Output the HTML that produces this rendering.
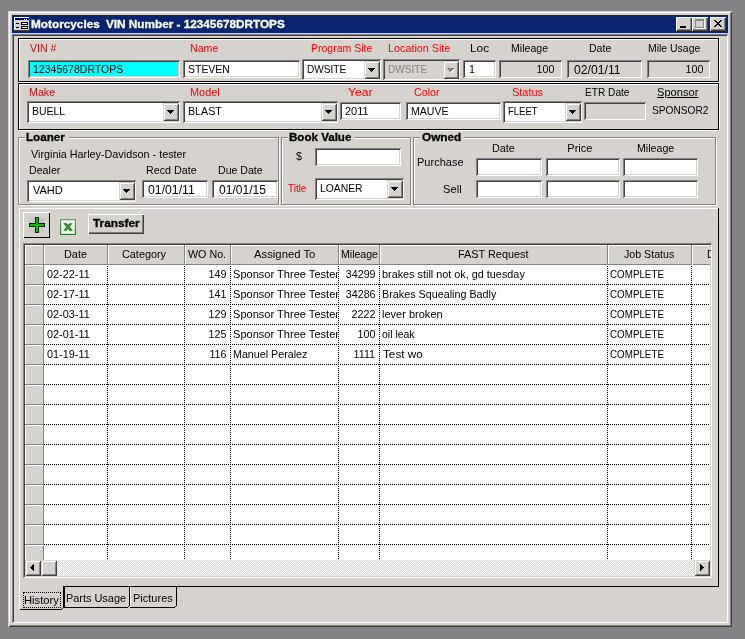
<!DOCTYPE html>
<html lang="en"><head><meta charset="utf-8"><title>Motorcycles VIN Number - 12345678DRTOPS</title>
<style>
html,body{margin:0;padding:0;}
body{width:745px;height:639px;background:#848284;position:relative;overflow:hidden;
font-family:"Liberation Sans",sans-serif;font-size:11px;line-height:13px;}
body div,body svg,body i,body span{position:absolute;display:block;}
.t{white-space:pre;height:13px;}
</style></head><body>
<div style="left:8px;top:11px;width:724px;height:616px;background:#d6d3ce;box-shadow:inset 1px 1px 0 #d6d3ce,inset -1px -1px 0 #424142,inset 2px 2px 0 #fff,inset -2px -2px 0 #848284;"></div>
<div style="left:12px;top:15px;width:716px;height:18px;background:#0a2470;"></div>
<div style="left:12px;top:34px;width:716px;height:589px;box-shadow:inset 1px 1px 0 #848284,inset -1px -1px 0 #fff,inset 2px 2px 0 #424142;"></div>
<svg style="left:14px;top:16px" width="16" height="16" viewBox="0 0 16 16" shape-rendering="crispEdges">
<rect x="0" y="1" width="16" height="14" fill="#d6d3ce"/>
<rect x="0" y="1" width="15" height="1" fill="#fff"/><rect x="0" y="1" width="1" height="13" fill="#fff"/>
<rect x="15" y="1" width="1" height="14" fill="#424142"/><rect x="0" y="14" width="16" height="1" fill="#424142"/>
<rect x="1" y="2" width="14" height="2" fill="#000080"/>
<rect x="10" y="3" width="1" height="1" fill="#fff"/><rect x="12" y="3" width="1" height="1" fill="#fff"/>
<rect x="2" y="7" width="3" height="1" fill="#000"/><rect x="2" y="11" width="3" height="1" fill="#000"/>
<rect x="7" y="6" width="7" height="3" fill="#000"/><rect x="8" y="7" width="5" height="1" fill="#fff"/>
<rect x="7" y="10" width="7" height="3" fill="#000"/><rect x="8" y="11" width="5" height="1" fill="#fff"/>
</svg>
<div style="left:676px;top:17px;width:16px;height:14px;background:#d6d3ce;box-shadow:inset 1px 1px 0 #fff,inset -1px -1px 0 #424142,inset -2px -2px 0 #848284;"><i style="left:4px;top:9px;width:6px;height:2px;background:#000"></i></div>
<div style="left:692px;top:17px;width:16px;height:14px;background:#d6d3ce;box-shadow:inset 1px 1px 0 #fff,inset -1px -1px 0 #424142,inset -2px -2px 0 #848284;"><i style="left:3px;top:2px;width:9px;height:9px;box-sizing:border-box;border:1px solid #848284;border-top-width:2px;box-shadow:1px 1px 0 #fff"></i></div>
<div style="left:710px;top:17px;width:16px;height:14px;background:#d6d3ce;box-shadow:inset 1px 1px 0 #fff,inset -1px -1px 0 #424142,inset -2px -2px 0 #848284;"><svg style="left:4px;top:3px" width="8" height="7" viewBox="0 0 8 7" shape-rendering="crispEdges"><path d="M0 0h2v1h1v1h2v-1h1v-1h2v1h-1v1h-1v1h-1v1h1v1h1v1h1v1h-2v-1h-1v-1h-2v1h-1v1h-2v-1h1v-1h1v-1h1v-1h-1v-1h-1v-1h-1z" fill="#000"/></svg></div>
<div style="left:19px;top:39px;width:701px;height:44px;box-sizing:border-box;border:1px solid #fff;"></div>
<div style="left:18px;top:38px;width:701px;height:44px;box-sizing:border-box;border:1px solid #000;"></div>
<div style="left:28px;top:60px;width:152px;height:18px;background:#00ffff;box-shadow:inset 1px 1px 0 #848284,inset -1px -1px 0 #fff,inset 2px 2px 0 #424142,inset -2px -2px 0 #d6d3ce;"></div>
<div style="left:183px;top:60px;width:117px;height:18px;background:#fff;box-shadow:inset 1px 1px 0 #848284,inset -1px -1px 0 #fff,inset 2px 2px 0 #424142,inset -2px -2px 0 #d6d3ce;"></div>
<div style="left:302px;top:59px;width:79px;height:21px;background:#fff;box-shadow:inset 1px 1px 0 #848284,inset -1px -1px 0 #fff,inset 2px 2px 0 #424142,inset -2px -2px 0 #d6d3ce;"></div>
<div style="left:364px;top:61px;width:16px;height:18px;background:#d6d3ce;box-shadow:inset 1px 1px 0 #d6d3ce,inset -1px -1px 0 #424142,inset 2px 2px 0 #fff,inset -2px -2px 0 #848284;"><svg style="left:4px;top:7px" width="8" height="5" viewBox="0 0 8 5" shape-rendering="crispEdges"><path d="M0 0h7v1h-1v1h-1v1h-1v1h-1v-1h-1v-1h-1v-1h-1z" fill="#000"/></svg></div>
<div style="left:383px;top:59px;width:77px;height:21px;background:#d6d3ce;box-shadow:inset 1px 1px 0 #848284,inset -1px -1px 0 #fff,inset 2px 2px 0 #424142,inset -2px -2px 0 #d6d3ce;"></div>
<div style="left:443px;top:61px;width:16px;height:18px;background:#d6d3ce;box-shadow:inset 1px 1px 0 #d6d3ce,inset -1px -1px 0 #424142,inset 2px 2px 0 #fff,inset -2px -2px 0 #848284;"><svg style="left:4px;top:7px" width="8" height="5" viewBox="0 0 8 5" shape-rendering="crispEdges"><path d="M1 1h7v1h-1v1h-1v1h-1v1h-1v-1h-1v-1h-1v-1h-1z" fill="#fff"/><path d="M0 0h7v1h-1v1h-1v1h-1v1h-1v-1h-1v-1h-1v-1h-1z" fill="#848284"/></svg></div>
<div style="left:463px;top:60px;width:33px;height:18px;background:#fff;box-shadow:inset 1px 1px 0 #848284,inset -1px -1px 0 #fff,inset 2px 2px 0 #424142,inset -2px -2px 0 #d6d3ce;"></div>
<div style="left:499px;top:60px;width:63px;height:18px;background:#d6d3ce;box-shadow:inset 1px 1px 0 #848284,inset -1px -1px 0 #fff,inset 2px 2px 0 #424142,inset -2px -2px 0 #d6d3ce;"></div>
<div style="left:567px;top:60px;width:75px;height:18px;background:#d6d3ce;box-shadow:inset 1px 1px 0 #848284,inset -1px -1px 0 #fff,inset 2px 2px 0 #424142,inset -2px -2px 0 #d6d3ce;"></div>
<div style="left:647px;top:60px;width:63px;height:18px;background:#d6d3ce;box-shadow:inset 1px 1px 0 #848284,inset -1px -1px 0 #fff,inset 2px 2px 0 #424142,inset -2px -2px 0 #d6d3ce;"></div>
<div style="left:19px;top:84px;width:701px;height:47px;box-sizing:border-box;border:1px solid #fff;"></div>
<div style="left:18px;top:83px;width:701px;height:47px;box-sizing:border-box;border:1px solid #000;"></div>
<div style="left:27px;top:101px;width:153px;height:22px;background:#fff;box-shadow:inset 1px 1px 0 #848284,inset -1px -1px 0 #fff,inset 2px 2px 0 #424142,inset -2px -2px 0 #d6d3ce;"></div>
<div style="left:163px;top:103px;width:16px;height:18px;background:#d6d3ce;box-shadow:inset 1px 1px 0 #d6d3ce,inset -1px -1px 0 #424142,inset 2px 2px 0 #fff,inset -2px -2px 0 #848284;"><svg style="left:4px;top:7px" width="8" height="5" viewBox="0 0 8 5" shape-rendering="crispEdges"><path d="M0 0h7v1h-1v1h-1v1h-1v1h-1v-1h-1v-1h-1v-1h-1z" fill="#000"/></svg></div>
<div style="left:183px;top:101px;width:155px;height:22px;background:#fff;box-shadow:inset 1px 1px 0 #848284,inset -1px -1px 0 #fff,inset 2px 2px 0 #424142,inset -2px -2px 0 #d6d3ce;"></div>
<div style="left:321px;top:103px;width:16px;height:18px;background:#d6d3ce;box-shadow:inset 1px 1px 0 #d6d3ce,inset -1px -1px 0 #424142,inset 2px 2px 0 #fff,inset -2px -2px 0 #848284;"><svg style="left:4px;top:7px" width="8" height="5" viewBox="0 0 8 5" shape-rendering="crispEdges"><path d="M0 0h7v1h-1v1h-1v1h-1v1h-1v-1h-1v-1h-1v-1h-1z" fill="#000"/></svg></div>
<div style="left:340px;top:102px;width:61px;height:18px;background:#fff;box-shadow:inset 1px 1px 0 #848284,inset -1px -1px 0 #fff,inset 2px 2px 0 #424142,inset -2px -2px 0 #d6d3ce;"></div>
<div style="left:406px;top:102px;width:95px;height:18px;background:#fff;box-shadow:inset 1px 1px 0 #848284,inset -1px -1px 0 #fff,inset 2px 2px 0 #424142,inset -2px -2px 0 #d6d3ce;"></div>
<div style="left:503px;top:101px;width:79px;height:22px;background:#fff;box-shadow:inset 1px 1px 0 #848284,inset -1px -1px 0 #fff,inset 2px 2px 0 #424142,inset -2px -2px 0 #d6d3ce;"></div>
<div style="left:565px;top:103px;width:16px;height:18px;background:#d6d3ce;box-shadow:inset 1px 1px 0 #d6d3ce,inset -1px -1px 0 #424142,inset 2px 2px 0 #fff,inset -2px -2px 0 #848284;"><svg style="left:4px;top:7px" width="8" height="5" viewBox="0 0 8 5" shape-rendering="crispEdges"><path d="M0 0h7v1h-1v1h-1v1h-1v1h-1v-1h-1v-1h-1v-1h-1z" fill="#000"/></svg></div>
<div style="left:584px;top:102px;width:62px;height:18px;background:#d6d3ce;box-shadow:inset 1px 1px 0 #848284,inset -1px -1px 0 #fff,inset 2px 2px 0 #424142,inset -2px -2px 0 #d6d3ce;"></div>
<div style="left:19px;top:138px;width:261px;height:68px;box-sizing:border-box;border:1px solid #fff;"></div>
<div style="left:18px;top:137px;width:261px;height:68px;box-sizing:border-box;border:1px solid #848284;"></div>
<div style="left:25px;top:135px;width:44px;height:5px;background:#d6d3ce;"></div>
<div style="left:282px;top:138px;width:130px;height:68px;box-sizing:border-box;border:1px solid #fff;"></div>
<div style="left:281px;top:137px;width:130px;height:68px;box-sizing:border-box;border:1px solid #848284;"></div>
<div style="left:288px;top:135px;width:67px;height:5px;background:#d6d3ce;"></div>
<div style="left:414px;top:138px;width:303px;height:68px;box-sizing:border-box;border:1px solid #fff;"></div>
<div style="left:413px;top:137px;width:303px;height:68px;box-sizing:border-box;border:1px solid #848284;"></div>
<div style="left:420px;top:135px;width:44px;height:5px;background:#d6d3ce;"></div>
<div style="left:27px;top:180px;width:109px;height:22px;background:#fff;box-shadow:inset 1px 1px 0 #848284,inset -1px -1px 0 #fff,inset 2px 2px 0 #424142,inset -2px -2px 0 #d6d3ce;"></div>
<div style="left:119px;top:182px;width:16px;height:18px;background:#d6d3ce;box-shadow:inset 1px 1px 0 #d6d3ce,inset -1px -1px 0 #424142,inset 2px 2px 0 #fff,inset -2px -2px 0 #848284;"><svg style="left:4px;top:7px" width="8" height="5" viewBox="0 0 8 5" shape-rendering="crispEdges"><path d="M0 0h7v1h-1v1h-1v1h-1v1h-1v-1h-1v-1h-1v-1h-1z" fill="#000"/></svg></div>
<div style="left:142px;top:180px;width:66px;height:18px;background:#fff;box-shadow:inset 1px 1px 0 #848284,inset -1px -1px 0 #fff,inset 2px 2px 0 #424142,inset -2px -2px 0 #d6d3ce;"></div>
<div style="left:212px;top:180px;width:66px;height:18px;background:#fff;box-shadow:inset 1px 1px 0 #848284,inset -1px -1px 0 #fff,inset 2px 2px 0 #424142,inset -2px -2px 0 #d6d3ce;"></div>
<div style="left:315px;top:148px;width:86px;height:18px;background:#fff;box-shadow:inset 1px 1px 0 #848284,inset -1px -1px 0 #fff,inset 2px 2px 0 #424142,inset -2px -2px 0 #d6d3ce;"></div>
<div style="left:315px;top:178px;width:89px;height:22px;background:#fff;box-shadow:inset 1px 1px 0 #848284,inset -1px -1px 0 #fff,inset 2px 2px 0 #424142,inset -2px -2px 0 #d6d3ce;"></div>
<div style="left:387px;top:180px;width:16px;height:18px;background:#d6d3ce;box-shadow:inset 1px 1px 0 #d6d3ce,inset -1px -1px 0 #424142,inset 2px 2px 0 #fff,inset -2px -2px 0 #848284;"><svg style="left:4px;top:7px" width="8" height="5" viewBox="0 0 8 5" shape-rendering="crispEdges"><path d="M0 0h7v1h-1v1h-1v1h-1v1h-1v-1h-1v-1h-1v-1h-1z" fill="#000"/></svg></div>
<div style="left:476px;top:158px;width:66px;height:18px;background:#fff;box-shadow:inset 1px 1px 0 #848284,inset -1px -1px 0 #fff,inset 2px 2px 0 #424142,inset -2px -2px 0 #d6d3ce;"></div>
<div style="left:476px;top:180px;width:66px;height:18px;background:#fff;box-shadow:inset 1px 1px 0 #848284,inset -1px -1px 0 #fff,inset 2px 2px 0 #424142,inset -2px -2px 0 #d6d3ce;"></div>
<div style="left:546px;top:158px;width:74px;height:18px;background:#fff;box-shadow:inset 1px 1px 0 #848284,inset -1px -1px 0 #fff,inset 2px 2px 0 #424142,inset -2px -2px 0 #d6d3ce;"></div>
<div style="left:546px;top:180px;width:74px;height:18px;background:#fff;box-shadow:inset 1px 1px 0 #848284,inset -1px -1px 0 #fff,inset 2px 2px 0 #424142,inset -2px -2px 0 #d6d3ce;"></div>
<div style="left:623px;top:158px;width:75px;height:18px;background:#fff;box-shadow:inset 1px 1px 0 #848284,inset -1px -1px 0 #fff,inset 2px 2px 0 #424142,inset -2px -2px 0 #d6d3ce;"></div>
<div style="left:623px;top:180px;width:75px;height:18px;background:#fff;box-shadow:inset 1px 1px 0 #848284,inset -1px -1px 0 #fff,inset 2px 2px 0 #424142,inset -2px -2px 0 #d6d3ce;"></div>
<div style="left:19px;top:208px;width:700px;height:379px;background:#d6d3ce;box-shadow:inset -1px -1px 0 #000,inset 1px 1px 0 #fff;"></div>
<div style="left:23px;top:212px;width:27px;height:26px;background:#d6d3ce;box-shadow:inset 1px 1px 0 #fff,inset -1px -1px 0 #000;"><i style="left:6px;top:5px;width:16px;height:16px;background:#c9c9c9"></i><svg style="left:6px;top:5px" width="16" height="16" viewBox="0 0 16 16" shape-rendering="crispEdges"><path d="M6 0h4v6h6v4h-6v6h-4v-6h-6v-4h6z" fill="#002000"/><path d="M7 1h2v6h6v2h-6v6h-2v-6h-6v-2h6z" fill="#00c400"/></svg></div>
<svg style="left:60px;top:219px" width="16" height="16" viewBox="0 0 16 16">
<defs><linearGradient id="xg" x1="0" y1="0" x2="0" y2="1"><stop offset="0" stop-color="#6aa06a"/><stop offset="1" stop-color="#2f6f2f"/></linearGradient></defs>
<rect x="0" y="0" width="16" height="16" fill="url(#xg)"/>
<rect x="1" y="1" width="14" height="14" fill="#c2e2c2"/>
<rect x="2" y="2" width="12" height="12" fill="#f2fcf2"/>
<path d="M3.2 4.3h3.4L13 11.7H9.6z" fill="#155c15"/>
<path d="M12.8 4.3H9.4L3 11.7h3.4z" fill="#2c902c"/>
<path d="M4.6 5h1.6l5.2 6H9.8z" fill="#3aa83a"/>
</svg>
<div style="left:88px;top:214px;width:56px;height:20px;background:#d6d3ce;box-shadow:inset 1px 1px 0 #fff,inset -1px -1px 0 #424142,inset -2px -2px 0 #848284;"></div>
<div style="left:23px;top:243px;width:689px;height:335px;background:#fff;box-shadow:inset 1px 1px 0 #848284,inset -1px -1px 0 #fff,inset 2px 2px 0 #424142,inset -2px -2px 0 #d6d3ce;"></div>
<div style="left:25px;top:245px;width:19px;height:20px;background:#d6d3ce;box-shadow:inset -1px -1px 0 #848284,inset 1px 1px 0 #fff;"></div>
<div style="left:44px;top:245px;width:64px;height:20px;background:#d6d3ce;box-shadow:inset -1px -1px 0 #848284,inset 1px 1px 0 #fff;"></div>
<div style="left:108px;top:245px;width:77px;height:20px;background:#d6d3ce;box-shadow:inset -1px -1px 0 #848284,inset 1px 1px 0 #fff;"></div>
<div style="left:185px;top:245px;width:46px;height:20px;background:#d6d3ce;box-shadow:inset -1px -1px 0 #848284,inset 1px 1px 0 #fff;"></div>
<div style="left:231px;top:245px;width:108px;height:20px;background:#d6d3ce;box-shadow:inset -1px -1px 0 #848284,inset 1px 1px 0 #fff;"></div>
<div style="left:339px;top:245px;width:41px;height:20px;background:#d6d3ce;box-shadow:inset -1px -1px 0 #848284,inset 1px 1px 0 #fff;"></div>
<div style="left:380px;top:245px;width:228px;height:20px;background:#d6d3ce;box-shadow:inset -1px -1px 0 #848284,inset 1px 1px 0 #fff;"></div>
<div style="left:608px;top:245px;width:84px;height:20px;background:#d6d3ce;box-shadow:inset -1px -1px 0 #848284,inset 1px 1px 0 #fff;"></div>
<div style="left:692px;top:245px;width:18px;height:20px;background:#d6d3ce;box-shadow:inset 1px 1px 0 #fff,inset 0 -1px 0 #848284;"></div>
<div style="left:25px;top:265px;width:19px;height:20px;background:#d6d3ce;box-shadow:inset -1px -1px 0 #848284,inset 1px 1px 0 #fff;"></div>
<div style="left:25px;top:285px;width:19px;height:20px;background:#d6d3ce;box-shadow:inset -1px -1px 0 #848284,inset 1px 1px 0 #fff;"></div>
<div style="left:25px;top:305px;width:19px;height:20px;background:#d6d3ce;box-shadow:inset -1px -1px 0 #848284,inset 1px 1px 0 #fff;"></div>
<div style="left:25px;top:325px;width:19px;height:20px;background:#d6d3ce;box-shadow:inset -1px -1px 0 #848284,inset 1px 1px 0 #fff;"></div>
<div style="left:25px;top:345px;width:19px;height:20px;background:#d6d3ce;box-shadow:inset -1px -1px 0 #848284,inset 1px 1px 0 #fff;"></div>
<div style="left:25px;top:365px;width:19px;height:20px;background:#d6d3ce;box-shadow:inset -1px -1px 0 #848284,inset 1px 1px 0 #fff;"></div>
<div style="left:25px;top:385px;width:19px;height:20px;background:#d6d3ce;box-shadow:inset -1px -1px 0 #848284,inset 1px 1px 0 #fff;"></div>
<div style="left:25px;top:405px;width:19px;height:20px;background:#d6d3ce;box-shadow:inset -1px -1px 0 #848284,inset 1px 1px 0 #fff;"></div>
<div style="left:25px;top:425px;width:19px;height:20px;background:#d6d3ce;box-shadow:inset -1px -1px 0 #848284,inset 1px 1px 0 #fff;"></div>
<div style="left:25px;top:445px;width:19px;height:20px;background:#d6d3ce;box-shadow:inset -1px -1px 0 #848284,inset 1px 1px 0 #fff;"></div>
<div style="left:25px;top:465px;width:19px;height:20px;background:#d6d3ce;box-shadow:inset -1px -1px 0 #848284,inset 1px 1px 0 #fff;"></div>
<div style="left:25px;top:485px;width:19px;height:20px;background:#d6d3ce;box-shadow:inset -1px -1px 0 #848284,inset 1px 1px 0 #fff;"></div>
<div style="left:25px;top:505px;width:19px;height:20px;background:#d6d3ce;box-shadow:inset -1px -1px 0 #848284,inset 1px 1px 0 #fff;"></div>
<div style="left:25px;top:525px;width:19px;height:20px;background:#d6d3ce;box-shadow:inset -1px -1px 0 #848284,inset 1px 1px 0 #fff;"></div>
<div style="left:25px;top:545px;width:19px;height:15px;background:#d6d3ce;box-shadow:inset 1px 1px 0 #fff,inset -1px 0 0 #848284;"></div>
<svg style="left:44px;top:265px" width="666" height="295" viewBox="0 0 666 295" shape-rendering="crispEdges"><g stroke="#000" stroke-width="1" stroke-dasharray="1 1" fill="none">
<path d="M0 19.5H666"/>
<path d="M0 39.5H666"/>
<path d="M0 59.5H666"/>
<path d="M0 79.5H666"/>
<path d="M0 99.5H666"/>
<path d="M0 119.5H666"/>
<path d="M0 139.5H666"/>
<path d="M0 159.5H666"/>
<path d="M0 179.5H666"/>
<path d="M0 199.5H666"/>
<path d="M0 219.5H666"/>
<path d="M0 239.5H666"/>
<path d="M0 259.5H666"/>
<path d="M0 279.5H666"/>
<path d="M63.5 0V295" stroke-dashoffset="1"/>
<path d="M140.5 0V295" stroke-dashoffset="1"/>
<path d="M186.5 0V295" stroke-dashoffset="1"/>
<path d="M294.5 0V295" stroke-dashoffset="1"/>
<path d="M335.5 0V295" stroke-dashoffset="1"/>
<path d="M563.5 0V295" stroke-dashoffset="1"/>
<path d="M647.5 0V295" stroke-dashoffset="1"/>
</g></svg>
<svg style="left:25px;top:560px" width="685" height="16" viewBox="0 0 685 16" shape-rendering="crispEdges"><defs><pattern id="dth" width="2" height="2" patternUnits="userSpaceOnUse"><rect width="2" height="2" fill="#fff"/><rect width="1" height="1" fill="#d6d3ce"/><rect x="1" y="1" width="1" height="1" fill="#d6d3ce"/></pattern></defs><rect width="685" height="16" fill="url(#dth)"/></svg>
<div style="left:25px;top:560px;width:16px;height:16px;background:#d6d3ce;box-shadow:inset 1px 1px 0 #d6d3ce,inset -1px -1px 0 #424142,inset 2px 2px 0 #fff,inset -2px -2px 0 #848284;"><svg style="left:5px;top:4px" width="4" height="7" viewBox="0 0 4 7" shape-rendering="crispEdges"><path d="M3 0h1v7h-1v-1h-1v-1h-1v-1h-1v-1h1v-1h1v-1h1z" fill="#000"/></svg></div>
<div style="left:41px;top:560px;width:16px;height:16px;background:#d6d3ce;box-shadow:inset 1px 1px 0 #d6d3ce,inset -1px -1px 0 #424142,inset 2px 2px 0 #fff,inset -2px -2px 0 #848284;"></div>
<div style="left:694px;top:560px;width:16px;height:16px;background:#d6d3ce;box-shadow:inset 1px 1px 0 #d6d3ce,inset -1px -1px 0 #424142,inset 2px 2px 0 #fff,inset -2px -2px 0 #848284;"><svg style="left:6px;top:4px" width="4" height="7" viewBox="0 0 4 7" shape-rendering="crispEdges"><path d="M0 0h1v1h1v1h1v1h1v1h-1v1h-1v1h-1v1h-1z" fill="#000"/></svg></div>
<div style="left:20px;top:585px;width:43px;height:2px;background:#d6d3ce;"></div>
<div style="left:19px;top:585px;width:1px;height:24px;background:#fff;"></div>
<div style="left:20px;top:609px;width:42px;height:1px;background:#000;"></div>
<div style="left:62px;top:608px;width:1px;height:1px;background:#000;"></div>
<div style="left:63px;top:587px;width:1px;height:21px;background:#000;"></div>
<div style="left:23px;top:592px;width:38px;height:16px;box-sizing:border-box;border:1px dotted #000;"></div>
<div style="left:64px;top:587px;width:1px;height:20px;background:#000;"></div>
<div style="left:64px;top:607px;width:64px;height:1px;background:#000;"></div>
<div style="left:128px;top:606px;width:1px;height:1px;background:#000;"></div>
<div style="left:129px;top:587px;width:1px;height:19px;background:#000;"></div>
<div style="left:130px;top:587px;width:1px;height:20px;background:#fff;"></div>
<div style="left:130px;top:607px;width:45px;height:1px;background:#000;"></div>
<div style="left:175px;top:606px;width:1px;height:1px;background:#000;"></div>
<div style="left:176px;top:587px;width:1px;height:19px;background:#000;"></div>
<div style="left:0;top:0;width:745px;height:639px;will-change:transform;">
<span id="t0" class="t" style="top:18.00px;color:#fff;font-weight:bold;-webkit-text-stroke:0.3px currentColor;left:31.23px;transform-origin:0 0;transform:scaleX(1.0714);">Motorcycles</span>
<span id="t1" class="t" style="top:18.00px;color:#fff;font-weight:bold;-webkit-text-stroke:0.3px currentColor;left:106.00px;transform-origin:0 0;transform:scaleX(1.0683);">VIN Number - 12345678DRTOPS</span>
<span id="t2" class="t" style="top:42.00px;color:#c41010;left:29.50px;transform-origin:0 0;transform:scaleX(0.9630);">VIN #</span>
<span id="t3" class="t" style="top:42.00px;color:#dc0808;left:190.29px;transform-origin:0 0;transform:scaleX(0.9643);">Name</span>
<span id="t4" class="t" style="top:42.00px;color:#ff0000;left:310.79px;transform-origin:0 0;transform:scaleX(0.9563);">Program Site</span>
<span id="t5" class="t" style="top:42.00px;color:#ff0000;left:388.22px;transform-origin:0 0;transform:scaleX(0.9806);">Location Site</span>
<span id="t6" class="t" style="top:42.00px;color:#000;left:469.67px;transform-origin:0 0;transform:scaleX(1.0781);">Loc</span>
<span id="t7" class="t" style="top:42.00px;color:#000;left:510.79px;transform-origin:0 0;transform:scaleX(0.9608);">Mileage</span>
<span id="t8" class="t" style="top:42.00px;color:#000;left:588.74px;transform-origin:0 0;transform:scaleX(0.9591);">Date</span>
<span id="t9" class="t" style="top:42.00px;color:#000;left:648.05px;transform-origin:0 0;transform:scaleX(0.9500);">Mile Usage</span>
<span id="t10" class="t" style="top:63.00px;color:#000;left:32.84px;transform-origin:0 0;transform:scaleX(0.9559);">12345678DRTOPS</span>
<span id="t11" class="t" style="top:63.00px;color:#000;left:187.80px;transform-origin:0 0;transform:scaleX(0.9524);">STEVEN</span>
<span id="t12" class="t" style="top:63.00px;color:#000;left:306.59px;transform-origin:0 0;transform:scaleX(0.9146);">DWSITE</span>
<span id="t13" class="t" style="top:63.00px;color:#848284;left:387.84px;transform-origin:0 0;transform:scaleX(0.9146);">DWSITE</span>
<span id="t14" class="t" style="top:63.00px;color:#000;left:468.52px;transform-origin:0 0;transform:scaleX(0.9750);">1</span>
<span id="t15" class="t" style="top:63.00px;color:#000;right:190.85px;transform-origin:100% 0;transform:scaleX(0.9750);">100</span>
<span id="t16" class="t" style="top:64.00px;color:#000;font-size:12px;left:574.00px;transform-origin:0 0;transform:scaleX(1.0178);">02/01/11</span>
<span id="t17" class="t" style="top:63.00px;color:#000;right:41.65px;transform-origin:100% 0;transform:scaleX(0.9750);">100</span>
<span id="t18" class="t" style="top:85.50px;color:#c41010;left:28.53px;transform-origin:0 0;transform:scaleX(0.9700);">Make</span>
<span id="t19" class="t" style="top:85.50px;color:#dc0808;left:189.51px;transform-origin:0 0;transform:scaleX(0.9911);">Model</span>
<span id="t20" class="t" style="top:85.50px;color:#ff0000;left:347.64px;transform-origin:0 0;transform:scaleX(1.1071);">Year</span>
<span id="t21" class="t" style="top:85.50px;color:#ff0000;left:413.53px;transform-origin:0 0;transform:scaleX(0.9700);">Color</span>
<span id="t22" class="t" style="top:85.50px;color:#ff0000;left:512.30px;transform-origin:0 0;transform:scaleX(0.9967);">Status</span>
<span id="t23" class="t" style="top:85.50px;color:#000;left:584.78px;transform-origin:0 0;transform:scaleX(0.9213);">ETR Date</span>
<span id="t24" class="t" style="top:85.50px;color:#000;left:656.79px;transform-origin:0 0;transform:scaleX(1.0125);text-decoration:underline;">Sponsor</span>
<span id="t25" class="t" style="top:105.00px;color:#000;left:31.55px;transform-origin:0 0;transform:scaleX(0.9470);">BUELL</span>
<span id="t26" class="t" style="top:105.00px;color:#000;left:187.78px;transform-origin:0 0;transform:scaleX(0.9706);">BLAST</span>
<span id="t27" class="t" style="top:105.00px;color:#000;left:345.00px;transform-origin:0 0;transform:scaleX(1.0000);">2011</span>
<span id="t28" class="t" style="top:105.00px;color:#000;left:410.79px;transform-origin:0 0;transform:scaleX(0.9605);">MAUVE</span>
<span id="t29" class="t" style="top:105.00px;color:#000;left:507.89px;transform-origin:0 0;transform:scaleX(0.8621);">FLEET</span>
<span id="t30" class="t" style="top:104.00px;color:#000;left:651.78px;transform-origin:0 0;transform:scaleX(0.9217);">SPONSOR2</span>
<span id="t31" class="t" style="top:131.00px;color:#000;font-weight:bold;-webkit-text-stroke:0.3px currentColor;left:25.94px;transform-origin:0 0;transform:scaleX(1.0556);">Loaner</span>
<span id="t32" class="t" style="top:131.00px;color:#000;font-weight:bold;-webkit-text-stroke:0.3px currentColor;left:288.95px;transform-origin:0 0;transform:scaleX(1.0517);">Book Value</span>
<span id="t33" class="t" style="top:131.00px;color:#000;font-weight:bold;-webkit-text-stroke:0.3px currentColor;left:422.00px;transform-origin:0 0;transform:scaleX(1.0694);">Owned</span>
<span id="t34" class="t" style="top:148.00px;color:#000;left:31.00px;transform-origin:0 0;transform:scaleX(0.9810);">Virginia Harley-Davidson - tester</span>
<span id="t35" class="t" style="top:164.00px;color:#000;left:28.53px;transform-origin:0 0;transform:scaleX(0.9677);">Dealer</span>
<span id="t36" class="t" style="top:164.00px;color:#000;left:145.53px;transform-origin:0 0;transform:scaleX(0.9740);">Recd Date</span>
<span id="t37" class="t" style="top:164.00px;color:#000;left:217.79px;transform-origin:0 0;transform:scaleX(0.9611);">Due Date</span>
<span id="t38" class="t" style="top:184.00px;color:#000;left:33.00px;transform-origin:0 0;transform:scaleX(1.0000);">VAHD</span>
<span id="t39" class="t" style="top:184.00px;color:#000;font-size:12px;left:148.30px;transform-origin:0 0;transform:scaleX(1.0222);">01/01/11</span>
<span id="t40" class="t" style="top:184.00px;color:#000;font-size:12px;left:218.75px;transform-origin:0 0;transform:scaleX(1.0054);">01/01/15</span>
<span id="t41" class="t" style="top:150.00px;color:#000;left:296.00px;transform-origin:0 0;transform:scaleX(0.9750);">$</span>
<span id="t42" class="t" style="top:182.00px;color:#c41010;left:288.00px;transform-origin:0 0;transform:scaleX(0.9000);">Title</span>
<span id="t43" class="t" style="top:182.00px;color:#000;left:319.56px;transform-origin:0 0;transform:scaleX(0.9419);">LOANER</span>
<span id="t44" class="t" style="top:142.00px;color:#000;left:491.52px;transform-origin:0 0;transform:scaleX(0.9773);">Date</span>
<span id="t45" class="t" style="top:142.00px;color:#000;left:567.30px;transform-origin:0 0;transform:scaleX(1.0000);">Price</span>
<span id="t46" class="t" style="top:142.00px;color:#000;left:636.73px;transform-origin:0 0;transform:scaleX(0.9676);">Mileage</span>
<span id="t47" class="t" style="top:156.00px;color:#000;left:417.20px;transform-origin:0 0;transform:scaleX(1.0022);">Purchase</span>
<span id="t48" class="t" style="top:183.00px;color:#000;left:442.74px;transform-origin:0 0;transform:scaleX(1.0147);">Sell</span>
<span id="t49" class="t" style="top:217.00px;color:#000;font-weight:bold;-webkit-text-stroke:0.3px currentColor;left:92.50px;transform-origin:0 0;transform:scaleX(1.0756);">Transfer</span>
<span id="t50" class="t" style="top:248.00px;color:#000;left:63.51px;transform-origin:0 0;transform:scaleX(0.9886);">Date</span>
<span id="t51" class="t" style="top:248.00px;color:#000;left:122.41px;transform-origin:0 0;transform:scaleX(0.9864);">Category</span>
<span id="t52" class="t" style="top:248.00px;color:#000;left:187.80px;transform-origin:0 0;transform:scaleX(0.9737);">WO No.</span>
<span id="t53" class="t" style="top:248.00px;color:#000;left:253.80px;transform-origin:0 0;transform:scaleX(1.0271);">Assigned To</span>
<span id="t54" class="t" style="top:248.00px;color:#000;left:340.54px;transform-origin:0 0;transform:scaleX(0.9595);">Mileage</span>
<span id="t55" class="t" style="top:248.00px;color:#000;left:457.81px;transform-origin:0 0;transform:scaleX(0.9886);">FAST Request</span>
<span id="t56" class="t" style="top:248.00px;color:#000;left:623.70px;transform-origin:0 0;transform:scaleX(0.9673);">Job Status</span>
<span id="t57" class="t" style="top:268.00px;color:#000;left:46.75px;transform-origin:0 0;transform:scaleX(0.9884);">02-22-11</span>
<span id="t58" class="t" style="top:268.00px;color:#000;right:518.75px;transform-origin:100% 0;transform:scaleX(0.9750);">149</span>
<span id="t59" class="t" style="top:268.00px;color:#000;left:232.99px;transform-origin:0 0;transform:scaleX(1.0058);width:104.40px;overflow:hidden;">Sponsor Three Tester</span>
<span id="t60" class="t" style="top:268.00px;color:#000;right:369.42px;transform-origin:100% 0;transform:scaleX(0.9750);">34299</span>
<span id="t61" class="t" style="top:268.00px;color:#000;left:382.21px;transform-origin:0 0;transform:scaleX(0.9854);">brakes still not ok, gd tuesday</span>
<span id="t62" class="t" style="top:268.00px;color:#000;left:609.81px;transform-origin:0 0;transform:scaleX(0.8915);">COMPLETE</span>
<span id="t63" class="t" style="top:288.00px;color:#000;left:46.75px;transform-origin:0 0;transform:scaleX(0.9884);">02-17-11</span>
<span id="t64" class="t" style="top:288.00px;color:#000;right:518.75px;transform-origin:100% 0;transform:scaleX(0.9750);">141</span>
<span id="t65" class="t" style="top:288.00px;color:#000;left:232.99px;transform-origin:0 0;transform:scaleX(1.0058);width:104.40px;overflow:hidden;">Sponsor Three Tester</span>
<span id="t66" class="t" style="top:288.00px;color:#000;right:369.42px;transform-origin:100% 0;transform:scaleX(0.9750);">34286</span>
<span id="t67" class="t" style="top:288.00px;color:#000;left:382.22px;transform-origin:0 0;transform:scaleX(0.9793);">Brakes Squealing Badly</span>
<span id="t68" class="t" style="top:288.00px;color:#000;left:609.81px;transform-origin:0 0;transform:scaleX(0.8915);">COMPLETE</span>
<span id="t69" class="t" style="top:308.00px;color:#000;left:46.75px;transform-origin:0 0;transform:scaleX(0.9884);">02-03-11</span>
<span id="t70" class="t" style="top:308.00px;color:#000;right:518.75px;transform-origin:100% 0;transform:scaleX(0.9750);">129</span>
<span id="t71" class="t" style="top:308.00px;color:#000;left:232.99px;transform-origin:0 0;transform:scaleX(1.0058);width:104.40px;overflow:hidden;">Sponsor Three Tester</span>
<span id="t72" class="t" style="top:308.00px;color:#000;right:369.53px;transform-origin:100% 0;transform:scaleX(0.9750);">2222</span>
<span id="t73" class="t" style="top:308.00px;color:#000;left:382.20px;transform-origin:0 0;transform:scaleX(1.0017);">lever broken</span>
<span id="t74" class="t" style="top:308.00px;color:#000;left:609.81px;transform-origin:0 0;transform:scaleX(0.8915);">COMPLETE</span>
<span id="t75" class="t" style="top:328.00px;color:#000;left:46.75px;transform-origin:0 0;transform:scaleX(0.9884);">02-01-11</span>
<span id="t76" class="t" style="top:328.00px;color:#000;right:518.75px;transform-origin:100% 0;transform:scaleX(0.9750);">125</span>
<span id="t77" class="t" style="top:328.00px;color:#000;left:232.99px;transform-origin:0 0;transform:scaleX(1.0058);width:104.40px;overflow:hidden;">Sponsor Three Tester</span>
<span id="t78" class="t" style="top:328.00px;color:#000;right:369.65px;transform-origin:100% 0;transform:scaleX(0.9750);">100</span>
<span id="t79" class="t" style="top:328.00px;color:#000;left:382.25px;transform-origin:0 0;transform:scaleX(0.9515);">oil leak</span>
<span id="t80" class="t" style="top:328.00px;color:#000;left:609.81px;transform-origin:0 0;transform:scaleX(0.8915);">COMPLETE</span>
<span id="t81" class="t" style="top:348.00px;color:#000;left:46.75px;transform-origin:0 0;transform:scaleX(0.9884);">01-19-11</span>
<span id="t82" class="t" style="top:348.00px;color:#000;right:518.57px;transform-origin:100% 0;transform:scaleX(0.9750);">116</span>
<span id="t83" class="t" style="top:348.00px;color:#000;left:233.03px;transform-origin:0 0;transform:scaleX(0.9733);">Manuel Peralez</span>
<span id="t84" class="t" style="top:348.00px;color:#000;right:369.97px;transform-origin:100% 0;transform:scaleX(0.9750);">1111</span>
<span id="t85" class="t" style="top:348.00px;color:#000;left:383.20px;transform-origin:0 0;transform:scaleX(1.0676);">Test wo</span>
<span id="t86" class="t" style="top:348.00px;color:#000;left:609.81px;transform-origin:0 0;transform:scaleX(0.8915);">COMPLETE</span>
<span id="t87" class="t" style="top:248.00px;color:#000;left:706.62px;transform-origin:0 0;transform:scaleX(0.9750);width:4.10px;overflow:hidden;">D</span>
<span id="t88" class="t" style="top:594.00px;color:#000;left:23.58px;transform-origin:0 0;transform:scaleX(1.0152);">History</span>
<span id="t89" class="t" style="top:592.00px;color:#000;left:65.51px;transform-origin:0 0;transform:scaleX(0.9915);">Parts Usage</span>
<span id="t90" class="t" style="top:592.00px;color:#000;left:132.75px;transform-origin:0 0;transform:scaleX(1.0013);">Pictures</span>
</div>
</body></html>
